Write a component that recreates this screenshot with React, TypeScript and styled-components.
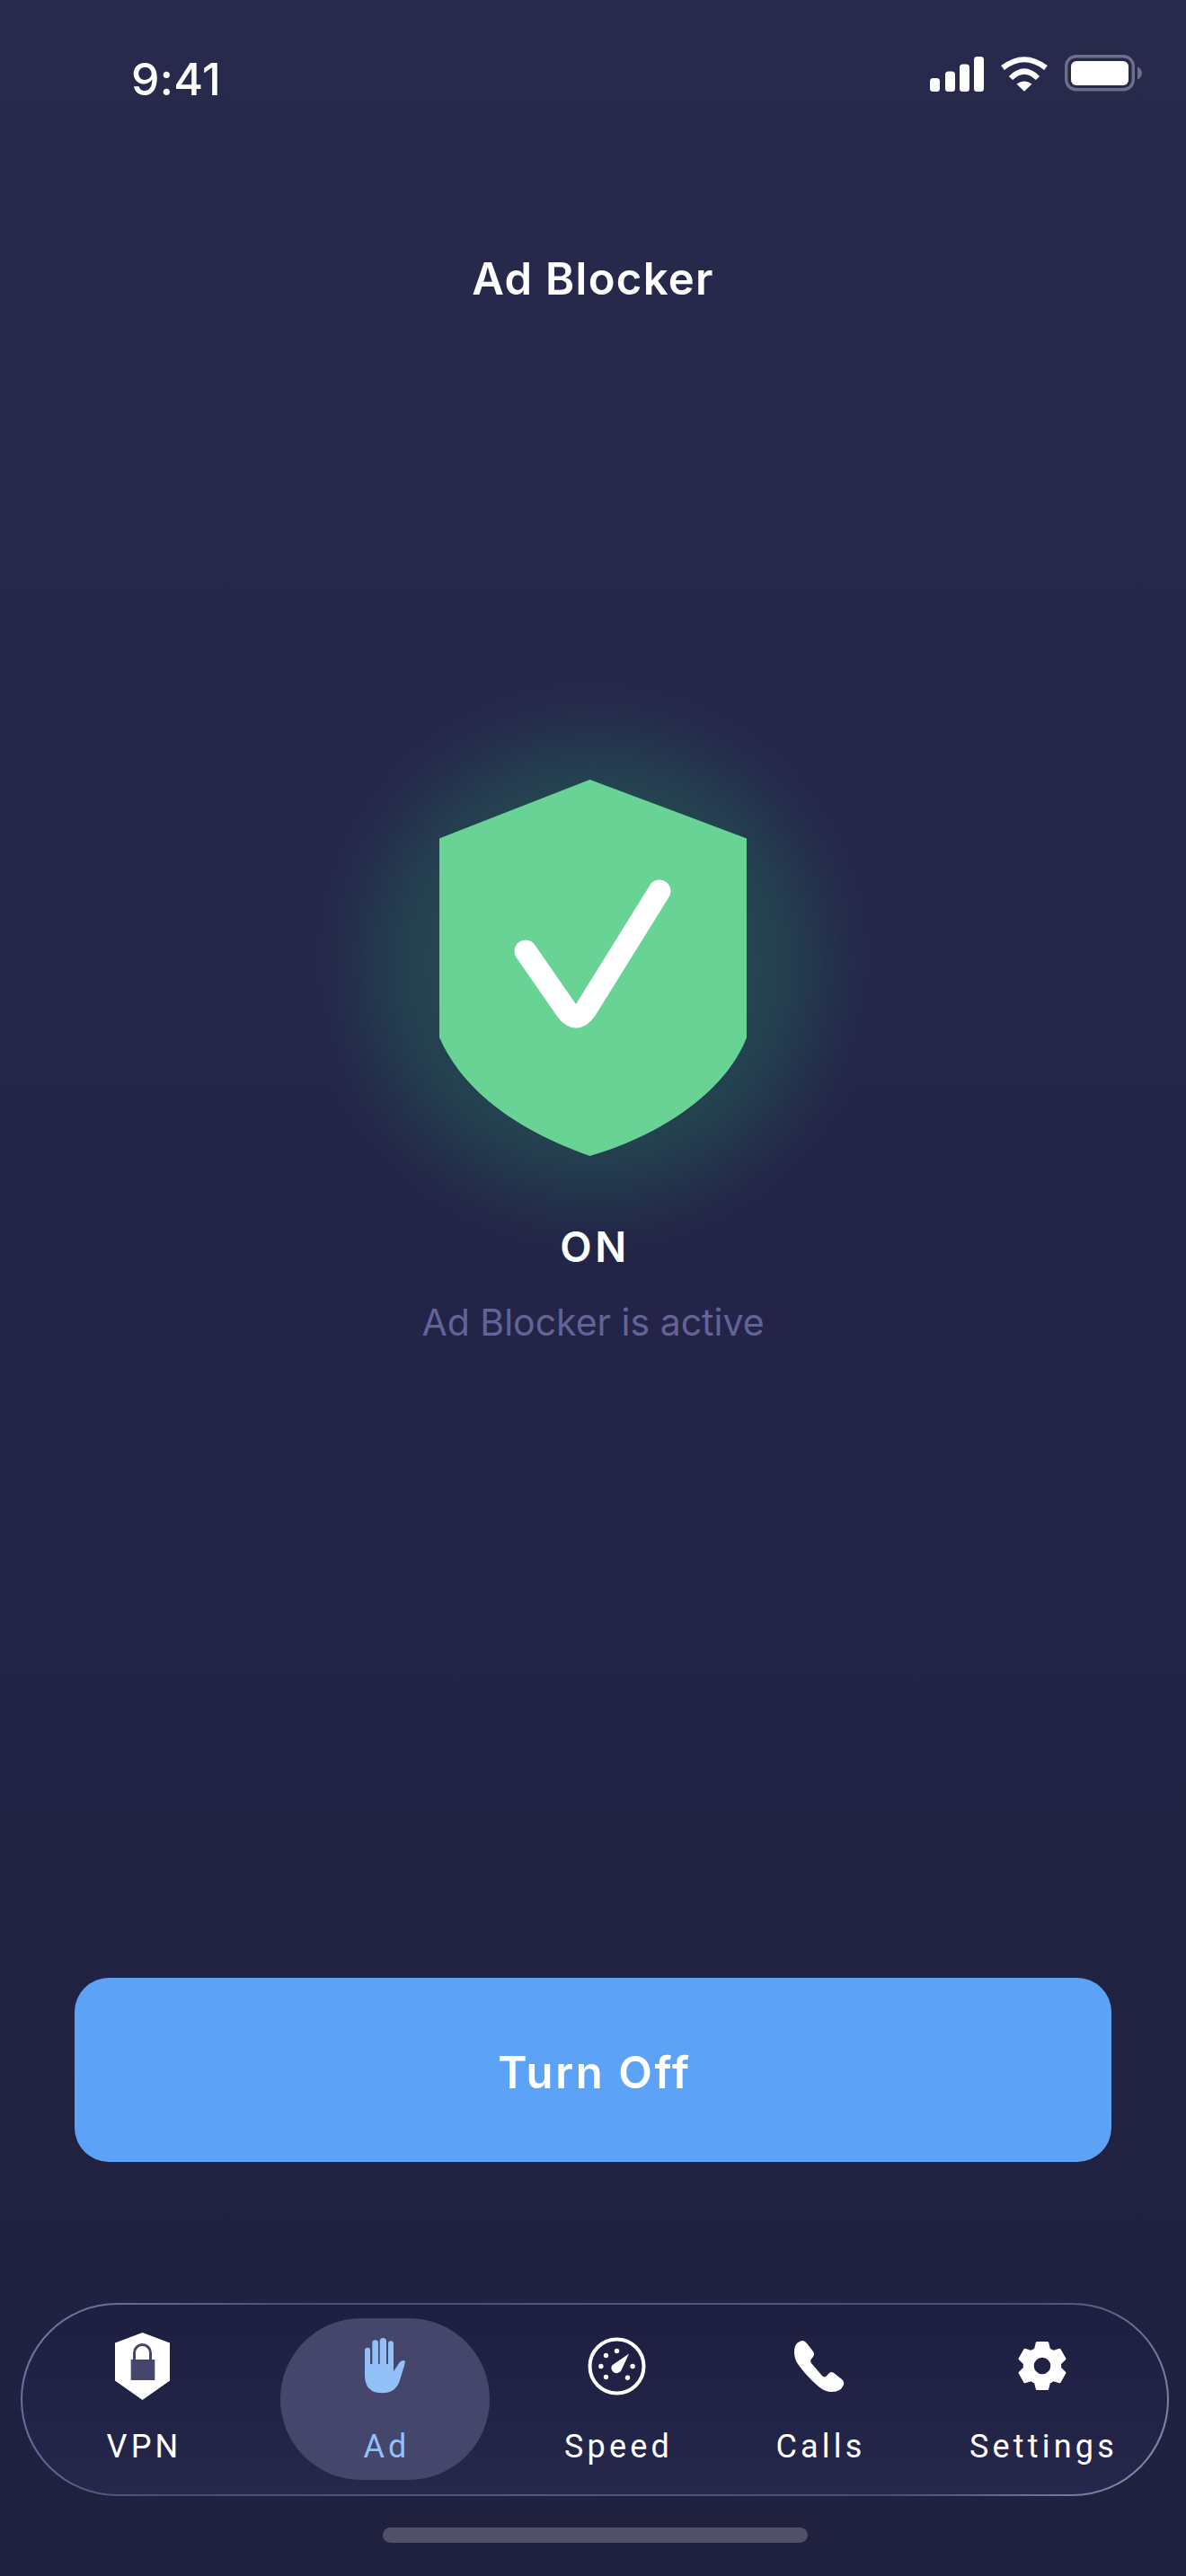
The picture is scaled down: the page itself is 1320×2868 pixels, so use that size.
import React from "react";
import styled, { createGlobalStyle } from "styled-components";

const Global = createGlobalStyle`
  html, body { margin: 0; padding: 0; background: #22233f; }
  * { box-sizing: border-box; }
`;

const Page = styled.main`
  width: 1320px;
  height: 2868px;
  display: flex;
  flex-direction: column;
  align-items: center;
  overflow: hidden;
  color: #fff;
  font-family: "Inter", "Liberation Sans", sans-serif;
  background: linear-gradient(180deg, #282a4c 0%, #24264a 35%, #20213f 100%);
`;

const StatusBar = styled.header`
  width: 100%;
  height: 120px;
  padding: 63px 49px 0 146px;
  display: flex;
  justify-content: space-between;
  align-items: flex-start;
`;

const Time = styled.span`
  font-size: 50px;
  font-weight: 500;
  line-height: 50px;
  letter-spacing: 0.3px;
`;

const StatusIcons = styled.div`
  display: flex;
  align-items: flex-start;
  gap: 18px;
  margin-top: -2px;
`;

const Title = styled.h1`
  margin: 163px 0 0;
  font-size: 49px;
  font-weight: 600;
  line-height: 56px;
  letter-spacing: 1.3px;
`;

const ShieldBox = styled.svg`
  display: block;
  width: 342px;
  height: 419px;
  margin: 529px 0 0;
  overflow: visible;
`;

const StateLabel = styled.div`
  margin-top: 74px;
  padding-left: 4px;
  font-size: 46px;
  font-weight: 600;
  line-height: 54px;
  letter-spacing: 3.5px;
  color: #fbfffe;
`;

const StateHint = styled.div`
  margin-top: 33px;
  font-size: 41px;
  font-weight: 400;
  line-height: 48px;
  color: #626396;
`;

const ActionButton = styled.button`
  width: 1154px;
  height: 205px;
  margin-top: 706px;
  padding: 6px 0 0 4px;
  border: 0;
  border-radius: 38px;
  background: #5ca3f8;
  color: #fff;
  font-family: inherit;
  font-size: 49px;
  font-weight: 600;
  letter-spacing: 2.6px;
`;

const Nav = styled.nav`
  width: 1278px;
  height: 215px;
  margin: 157px 0 0 4px;
  padding: 15px 0 0 18px;
  display: flex;
  gap: 38px;
  border: 2.5px solid transparent;
  border-radius: 108px;
  background:
    linear-gradient(180deg, #1d1e40 0%, #25274b 100%) padding-box,
    linear-gradient(125deg, #7a7ba6 0%, #4a4c74 22%, #55577f 50%, #4a4c74 78%, #8f90b5 100%) border-box;
`;

const Tab = styled.div<{ $width: number; $active?: boolean }>`
  width: ${(p) => p.$width}px;
  height: 180px;
  flex: none;
  padding-top: 11px;
  display: flex;
  flex-direction: column;
  align-items: center;
  border-radius: 90px;
  background: ${(p) => (p.$active ? "#45466c" : "transparent")};
  color: ${(p) => (p.$active ? "#93c0f7" : "#fff")};
`;

const TabIcon = styled.div`
  height: 84px;
  display: flex;
  align-items: center;
  justify-content: center;
`;

const TabLabel = styled.span`
  margin-top: 28px;
  padding-left: 4px;
  font-family: "Roboto", "Liberation Sans", sans-serif;
  font-size: 36px;
  font-weight: 400;
  line-height: 40px;
  letter-spacing: 4.2px;
`;

const HomeBar = styled.div`
  width: 473px;
  height: 17px;
  margin: 35px 0 0 5px;
  border-radius: 9px;
  background: #505068;
`;

const SignalIcon = () => (
  <svg width="60" height="39" viewBox="0 0 60 39" style={{ marginTop: 1.7 }}>
    <rect x="0" y="24" width="11" height="15" rx="3.5" fill="#fff" />
    <rect x="17" y="16.5" width="11" height="22.5" rx="3.5" fill="#fff" />
    <rect x="33" y="8.5" width="11" height="30.5" rx="3.5" fill="#fff" />
    <rect x="49" y="0" width="11" height="39" rx="3.5" fill="#fff" />
  </svg>
);

const WifiIcon = () => (
  <svg width="54" height="39" viewBox="0 0 54 39" style={{ marginTop: 1.7 }}>
    <path d="M3 12.5Q27-6 51 12.5" fill="none" stroke="#fff" strokeWidth="6" />
    <path d="M12 24Q27 9 42 24" fill="none" stroke="#fff" strokeWidth="6" />
    <path d="M18.5 30.5Q27 24.5 35.5 30.5L27 38.8Z" fill="#fff" />
  </svg>
);

const BatteryIcon = () => (
  <svg width="86" height="41" viewBox="0 0 86 41">
    <rect x="1.7" y="1.7" width="74.6" height="37" rx="11" fill="none" stroke="#6d6e8a" strokeWidth="3.4" />
    <rect x="7" y="7" width="64" height="27" rx="6" fill="#fff" />
    <path d="M81 13.5c3 1 5 4 5 7s-2 6-5 7Z" fill="#6d6e8a" />
  </svg>
);

const VpnIcon = () => (
  <svg width="61" height="75" viewBox="0 0 61 75">
    <path d="M30.5 0.5L61 12V53L30.5 74.5L0 53V12Z" fill="#fff" stroke="#fff" strokeWidth="1" strokeLinejoin="round" />
    <path d="M21.5 31V22.5a9 9 0 0 1 18 0V31" fill="none" stroke="#45466c" strokeWidth="3" />
    <rect x="17.7" y="30" width="26.6" height="23" fill="#45466c" />
  </svg>
);

const HandIcon = () => (
  <svg width="45" height="61.3" viewBox="0 0 135 184">
    <path
      d="M0 41A9 9 0 0 1 18 41L18 87L25 87L25 17A10 10 0 0 1 45 17L45 87L50 87L50 11A11 11 0 0 1 72 11L72 87L78 87L78 19A9 9 0 0 1 96 19L96 112L116 82Q128 70 135 78Q132 95 126 112L115 148Q100 184 60 184Q0 184 0 125Z"
      fill="currentColor"
    />
  </svg>
);

const SpeedIcon = () => (
  <svg width="65" height="65" viewBox="-32.5 -32.5 65 65">
    <circle cx="0" cy="0" r="30" fill="none" stroke="#fff" strokeWidth="4" />
    {[
      [0, -17],
      [-12, -12],
      [-17.6, 0],
      [-12, 12],
      [12, 12.7],
      [17.6, 0],
    ].map(([x, y]) => (
      <circle key={`${x}${y}`} cx={x} cy={y} r="2.7" fill="#fff" />
    ))}
    <path d="M13.5-14L5 4.5A5.6 5.6 0 0 1-5.4-1Z" fill="#fff" />
  </svg>
);

const CallsIcon = () => (
  <svg width="56" height="57" viewBox="0 0 56 57">
    <path
      d="M9 0Q12 0 14 3L21 12Q23 15 21 18L18.5 21Q17.5 23 19 25L31 39Q33 41 35 40L38.5 36.5Q41 34 44 36L53 43Q56 46 55 49Q52 57 42 57Q34 57 27 51Q14 40 4 26Q0 20 0 13Q0 3 6 1Q8 0 9 0Z"
      fill="#fff"
    />
  </svg>
);

const gearPath = (() => {
  const pt = (r: number, deg: number) => {
    const a = (deg * Math.PI) / 180;
    return `${(r * Math.cos(a)).toFixed(2)} ${(r * Math.sin(a)).toFixed(2)}`;
  };
  let d = "";
  for (let k = 0; k < 6; k++) {
    const a = k * 60 - 90;
    d += `${k === 0 ? "M" : "A20 20 0 0 1 "}${pt(20, a - 23)}L${pt(26.5, a - 13)}L${pt(26.5, a + 13)}L${pt(20, a + 23)}`;
  }
  d += `A20 20 0 0 1 ${pt(20, -113)}Z`;
  d += "M10.5 0A10.5 10.5 0 1 0-10.5 0A10.5 10.5 0 1 0 10.5 0Z";
  return d;
})();

const SettingsIcon = () => (
  <svg width="60" height="58" viewBox="-30 -29 60 58">
    <path d={gearPath} fill="#fff" fillRule="evenodd" stroke="#fff" strokeWidth="2.4" strokeLinejoin="round" />
  </svg>
);

const tabs = [
  { label: "VPN", width: 231, icon: <VpnIcon /> },
  { label: "Ad", width: 233, icon: <HandIcon />, active: true },
  { label: "Speed", width: 207, icon: <SpeedIcon /> },
  { label: "Calls", width: 167, icon: <CallsIcon /> },
  { label: "Settings", width: 253, icon: <SettingsIcon /> },
];

export default function App() {
  return (
    <Page>
      <Global />
      <StatusBar>
        <Time>9:41</Time>
        <StatusIcons>
          <SignalIcon />
          <WifiIcon />
          <BatteryIcon />
        </StatusIcons>
      </StatusBar>
      <Title>Ad Blocker</Title>
      <ShieldBox viewBox="0 0 342 419">
        <defs>
          <radialGradient id="shieldGlow">
            <stop offset="0.5" stopColor="rgb(36,212,115)" stopOpacity="0.19" />
            <stop offset="0.66" stopColor="rgb(36,212,115)" stopOpacity="0.15" />
            <stop offset="0.8" stopColor="rgb(36,212,115)" stopOpacity="0.08" />
            <stop offset="0.92" stopColor="rgb(36,212,115)" stopOpacity="0.02" />
            <stop offset="1" stopColor="rgb(36,212,115)" stopOpacity="0" />
          </radialGradient>
        </defs>
        <circle cx="171" cy="209" r="320" fill="url(#shieldGlow)" />
        <path
          d="M167.5 0L342 65.5V287C320 345 250 395 167.5 419C100 395 30 355 0 287V65.5Z"
          fill="#68d394"
        />
        <path
          d="M96 191L141 256Q152 272 163 256L245 124"
          fill="none"
          stroke="#fff"
          strokeWidth="25"
          strokeLinecap="round"
          strokeLinejoin="round"
        />
      </ShieldBox>
      <StateLabel>ON</StateLabel>
      <StateHint>Ad Blocker is active</StateHint>
      <ActionButton>Turn Off</ActionButton>
      <Nav>
        {tabs.map((t) => (
          <Tab key={t.label} $width={t.width} $active={t.active}>
            <TabIcon>{t.icon}</TabIcon>
            <TabLabel>{t.label}</TabLabel>
          </Tab>
        ))}
      </Nav>
      <HomeBar />
    </Page>
  );
}
